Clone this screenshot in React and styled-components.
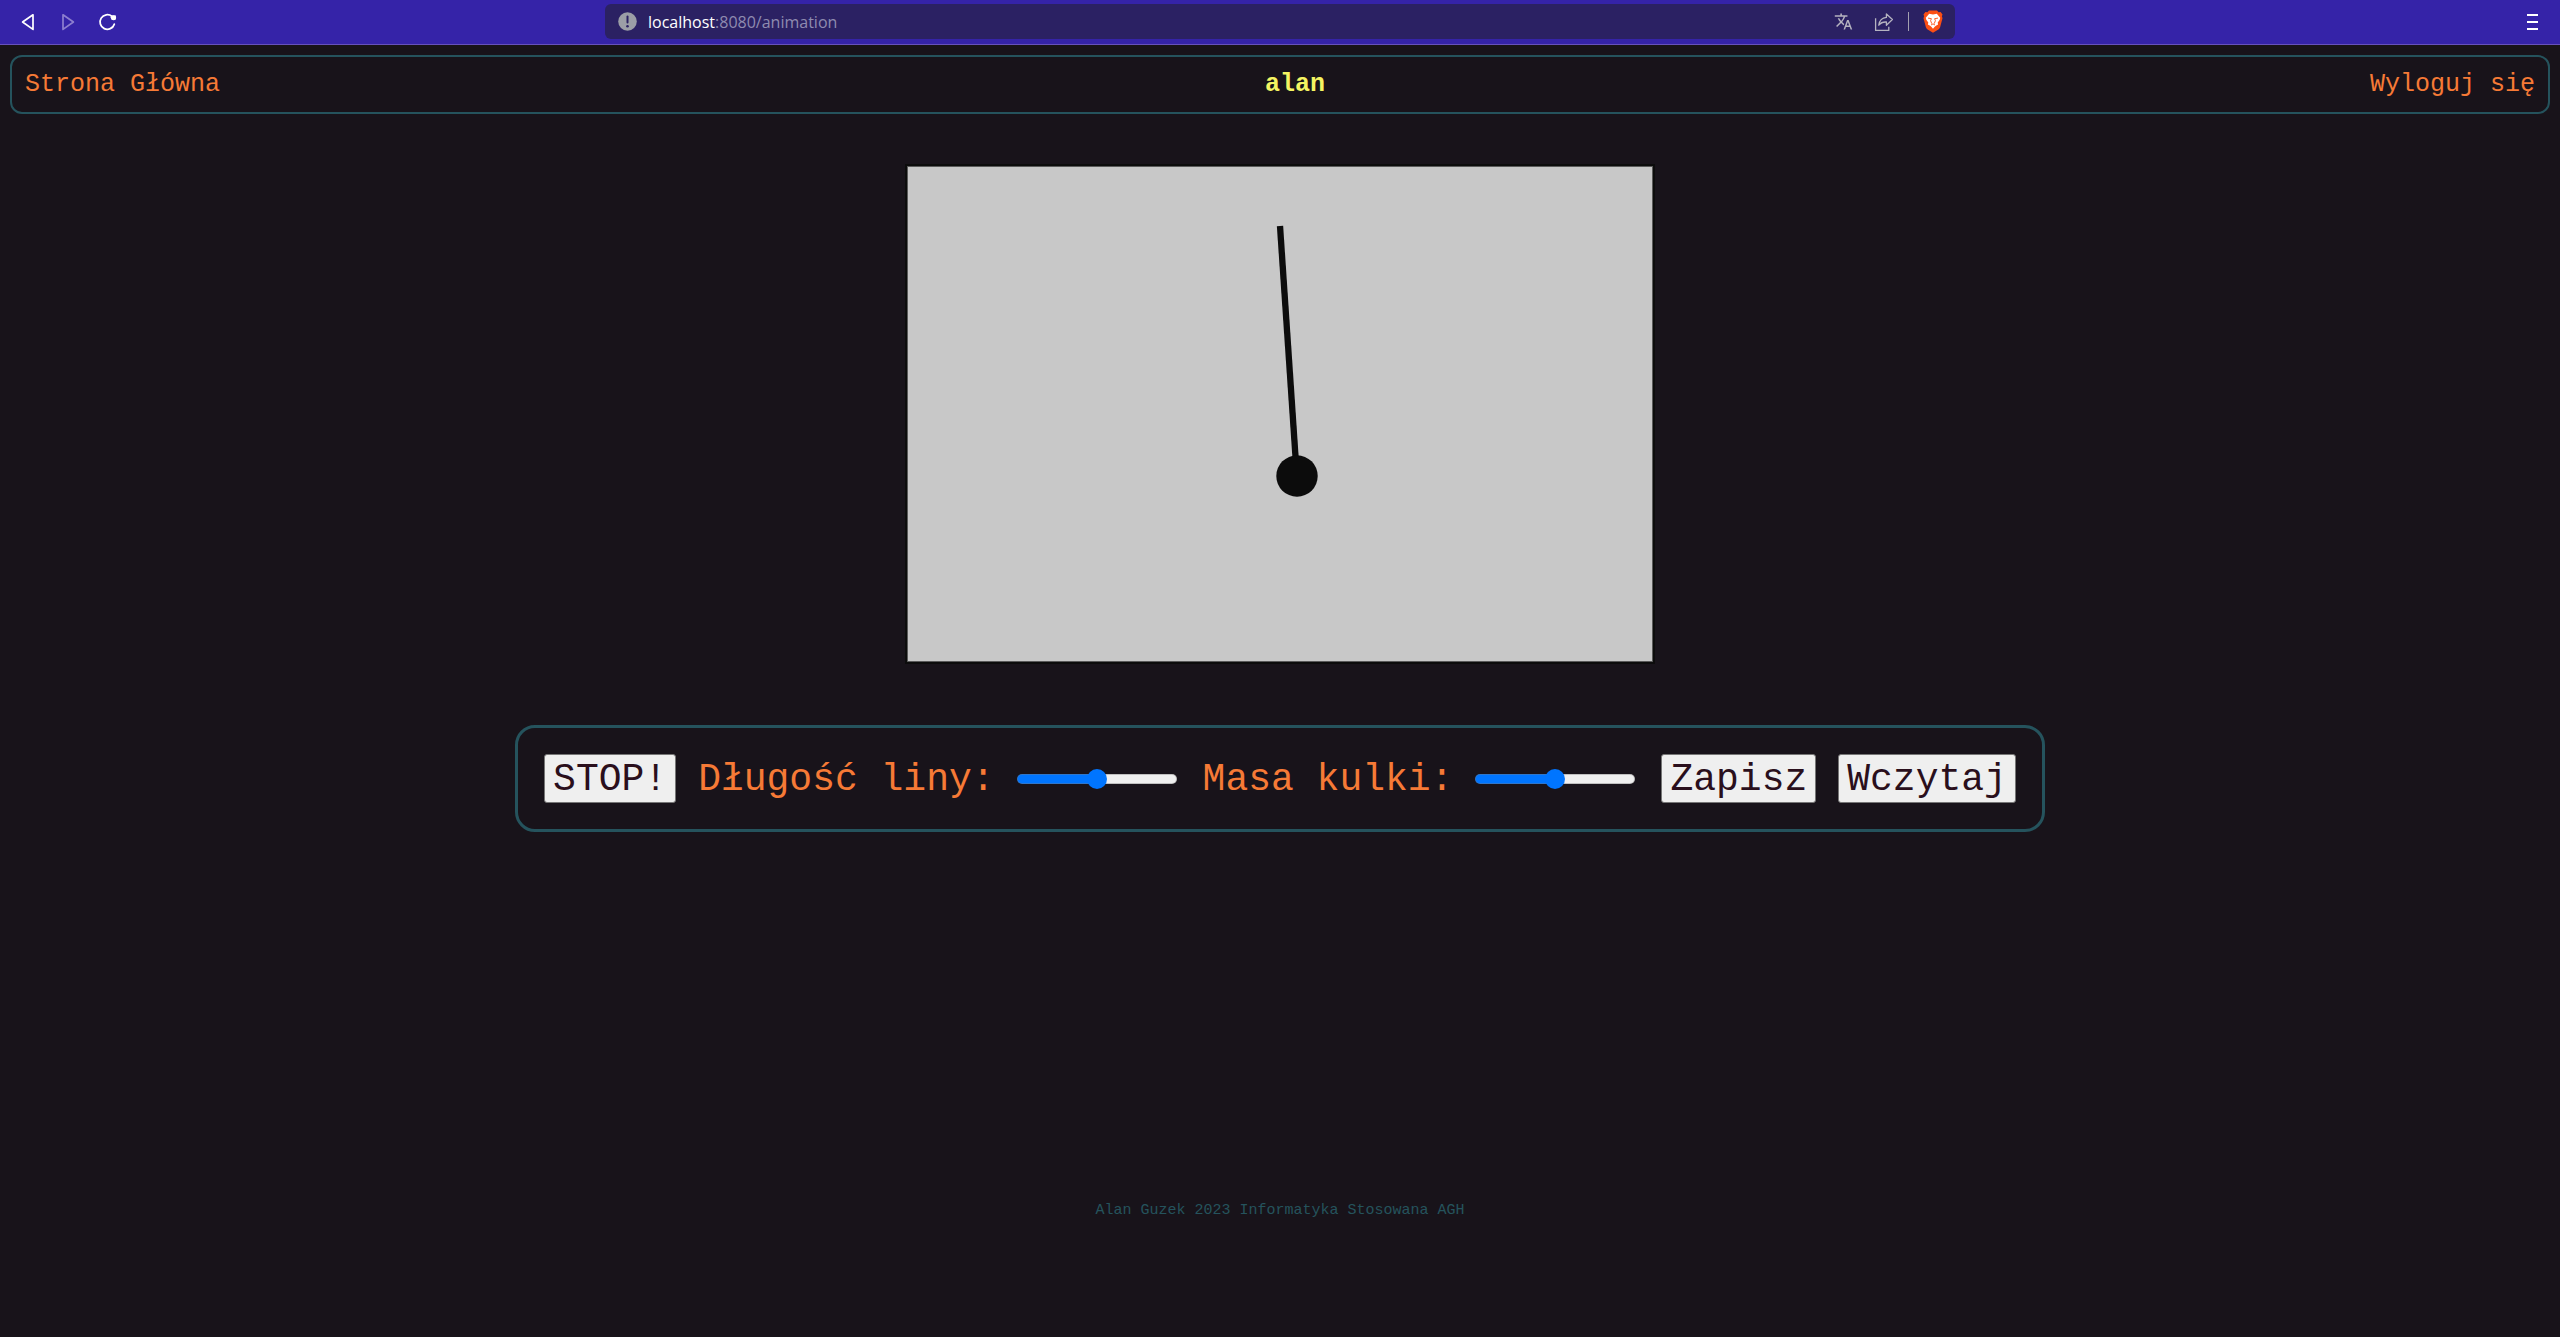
import React, { useState } from "react";
import styled, { createGlobalStyle } from "styled-components";
import { MdTranslate } from "react-icons/md";

const GlobalStyle = createGlobalStyle`
  *, *::before, *::after { box-sizing: border-box; }
  html, body, #root { height: 100%; }
  body {
    margin: 0;
    background: #18131a;
    font-family: "Courier New", "Liberation Mono", monospace;
  }
`;

const Page = styled.div`
  min-height: 100%;
  display: flex;
  flex-direction: column;
`;

const BrowserBar = styled.header`
  display: grid;
  grid-template-columns: 1fr minmax(0, 1350px) 1fr;
  align-items: center;
  height: 45px;
  padding: 0 15px 1px;
  background: #3523a8;
  border-bottom: 1px solid #6751bd;
  font-family: "Open Sans", "Noto Sans", sans-serif;
`;

const BarGroup = styled.div`
  display: flex;
  align-items: center;
  justify-content: ${(p) => (p.$end ? "flex-end" : "flex-start")};
  gap: 14px;
`;

const IconButton = styled.button`
  display: flex;
  align-items: center;
  justify-content: center;
  width: 26px;
  height: 26px;
  padding: 0;
  border: 0;
  background: none;
  color: ${(p) => p.$color || "#ffffff"};
`;

const AddressBar = styled.div`
  display: flex;
  align-items: center;
  gap: 11px;
  height: 35px;
  padding: 0 12px 0 13px;
  border-radius: 6px;
  background: #2b2163;
`;

const Address = styled.div`
  flex: 1;
  font-size: 16px;
  line-height: 24px;
  color: #8f8bb0;
`;

const Host = styled.span`
  color: #ffffff;
`;

const AddressActions = styled.div`
  display: flex;
  align-items: center;
  gap: 15px;
`;

const Shield = styled.div`
  display: flex;
  align-items: center;
  gap: 14px;
  margin-left: -4px;
`;

const Divider = styled.span`
  width: 1px;
  height: 19px;
  background: #a3a0b0;
`;

const NavBar = styled.nav`
  display: flex;
  align-items: center;
  justify-content: space-between;
  height: 59px;
  margin: 10px 10px 0;
  padding: 0 13px;
  border: 2px solid #25535d;
  border-radius: 12px;
  font-size: 25px;
  line-height: 28px;
`;

const NavLink = styled.a`
  color: #f67a36;
  text-decoration: none;
`;

const UserName = styled.span`
  color: #f4f462;
  font-weight: 700;
`;

const Main = styled.main`
  display: flex;
  flex-direction: column;
  align-items: center;
  gap: 61px;
  padding-top: 50px;
`;

const Stage = styled.svg`
  display: block;
  width: 750px;
  max-width: 100%;
  background: #c8c8c8;
`;

const Controls = styled.form`
  display: flex;
  align-items: center;
  gap: 22px;
  height: 107px;
  padding: 0 26px;
  border: 3px solid #25535d;
  border-radius: 20px;
  font-size: 38px;
  line-height: 44px;
`;

const ControlButton = styled.button`
  padding: 3px 8px 0;
  border: 1px solid #767676;
  border-radius: 3px;
  background: #efefef;
  color: #2a0f1c;
  font: inherit;
`;

const ControlLabel = styled.label`
  padding-top: 3px;
  color: #f67a36;
`;

const Slider = styled.input`
  appearance: none;
  width: 160px;
  height: 20px;
  margin: 0 4px 0 0;
  background: none;

  &::-webkit-slider-runnable-track {
    height: 10px;
    border: 1px solid rgba(120, 120, 120, 0.4);
    border-radius: 5px;
    background: linear-gradient(
      to right,
      #0075ff ${(p) => p.value}%,
      #efefef ${(p) => p.value}%
    ) border-box;
  }

  &::-webkit-slider-thumb {
    appearance: none;
    width: 20px;
    height: 20px;
    margin-top: -6px;
    border-radius: 50%;
    background: #0075ff;
  }
`;

const Footer = styled.footer`
  margin-top: 370px;
  text-align: center;
  font-size: 15px;
  line-height: 18px;
  color: #25535d;
`;

function BackIcon() {
  return (
    <svg width="26" height="26" viewBox="0 0 26 26" fill="none" stroke="currentColor" strokeWidth="1.7" strokeLinejoin="round">
      <path d="M18 5.8v14.6L7.6 13z" />
    </svg>
  );
}

function ForwardIcon() {
  return (
    <svg width="26" height="26" viewBox="0 0 26 26" fill="none" stroke="currentColor" strokeWidth="1.7" strokeLinejoin="round">
      <path d="M8 5.8v14.6L18.4 13z" />
    </svg>
  );
}

function ReloadIcon() {
  return (
    <svg width="26" height="26" viewBox="0 0 26 26" fill="none" stroke="currentColor" strokeWidth="1.8" strokeLinecap="round">
      <path d="M19.3 15.2A7.3 7.3 0 1 1 17 7.4" />
      <path d="M16 6.6h5l-.8 4.2-3.2.2-1.4-2.6z" fill="currentColor" stroke="none" />
      <circle cx="18.6" cy="8.8" r="2.5" fill="currentColor" stroke="none" />
    </svg>
  );
}

function InfoIcon() {
  return (
    <svg width="19" height="19" viewBox="0 0 19 19">
      <circle cx="9.5" cy="9.5" r="9.3" fill="#9b9ea6" />
      <rect x="8.5" y="3.5" width="2" height="8" rx="1" fill="#2b2163" />
      <circle cx="9.5" cy="14.3" r="1.3" fill="#2b2163" />
    </svg>
  );
}

function ShareIcon() {
  return (
    <svg width="20" height="20" viewBox="0 0 20 20" fill="none" stroke="currentColor" strokeWidth="1.3" strokeLinejoin="round">
      <path d="M1.600 6.200v12.200h13.200v-3.600" />
      <path d="M4.800 13.200c.6-4.600 3-7.400 7.600-7.800V2l6 5.600-6 5.600V10c-3.600-.2-5.800.8-7.600 3.200z" />
    </svg>
  );
}

function LionIcon() {
  return (
    <svg width="20" height="23" viewBox="0 0 20 23">
      <path d="M6 .5h8l1.600 1.700 2-.2 1.900 2.500-.6 1.800.6 2-2.400 9c-.3 1-.9 1.700-1.700 2.300L10 22.800l-5.400-3.200c-.8-.6-1.400-1.300-1.700-2.300L.5 8.300l.6-2-.6-1.800L2.400 2l2 .2z" fill="#fb4f14" />
      <path d="M6.200 3.800 10 4.500l3.800-.7 3.400 4-.5 1.900-2 2.900.4 2-2.200 1.200-1.200.9L10 18.800l-1.700-2.100-1.200-.9-2.200-1.200.4-2-2-2.900-.5-1.900z" fill="#fff" />
      <path d="M5 8.100l3.400.6-.8 2 1.200 3M15 8.100l-3.400.6.8 2-1.200 3M8 15l2-1.100 2 1.100" fill="none" stroke="#fb4f14" strokeWidth="0.900" />
    </svg>
  );
}

function MenuIcon() {
  return (
    <svg width="26" height="26" viewBox="0 0 26 26" fill="currentColor">
      <path d="M8 5h11v2H8zM8 12h11v2H8zM8 19h11v2H8z" />
    </svg>
  );
}

function Pendulum() {
  return (
    <Stage viewBox="0 0 750 500" role="img" aria-label="Wahadło">
      <rect x="2.500" y="2.500" width="745" height="495" fill="none" stroke="#5a5a5a" />
      <rect x="1" y="1" width="748" height="498" fill="none" stroke="#0c0c0c" strokeWidth="2" />
      <line x1="375" y1="62" x2="391" y2="300" stroke="#0c0c0c" strokeWidth="6.300" />
      <circle cx="392" cy="312" r="20.700" fill="#0c0c0c" />
    </Stage>
  );
}

export default function App() {
  const [length, setLength] = useState(50);
  const [mass, setMass] = useState(50);

  return (
    <>
      <GlobalStyle />
      <Page>
        <BrowserBar>
          <BarGroup>
            <IconButton aria-label="Wstecz"><BackIcon /></IconButton>
            <IconButton aria-label="Dalej" $color="#8d7fcf"><ForwardIcon /></IconButton>
            <IconButton aria-label="Odśwież"><ReloadIcon /></IconButton>
          </BarGroup>
          <AddressBar>
            <InfoIcon />
            <Address><Host>localhost</Host>:8080/animation</Address>
            <AddressActions>
              <IconButton aria-label="Przetłumacz" $color="#b5b3c0"><MdTranslate size={19} /></IconButton>
              <IconButton aria-label="Udostępnij" $color="#b5b3c0"><ShareIcon /></IconButton>
              <Shield>
                <Divider />
                <LionIcon />
              </Shield>
            </AddressActions>
          </AddressBar>
          <BarGroup $end>
            <IconButton aria-label="Menu"><MenuIcon /></IconButton>
          </BarGroup>
        </BrowserBar>
        <NavBar>
          <NavLink href="#home">Strona Główna</NavLink>
          <UserName>alan</UserName>
          <NavLink href="#logout">Wyloguj się</NavLink>
        </NavBar>
        <Main>
          <Pendulum />
          <Controls onSubmit={(e) => e.preventDefault()}>
            <ControlButton type="button">STOP!</ControlButton>
            <ControlLabel htmlFor="length">Długość liny:</ControlLabel>
            <Slider id="length" type="range" min="0" max="100" value={length} onChange={(e) => setLength(e.target.value)} />
            <ControlLabel htmlFor="mass">Masa kulki:</ControlLabel>
            <Slider id="mass" type="range" min="0" max="100" value={mass} onChange={(e) => setMass(e.target.value)} />
            <ControlButton type="button">Zapisz</ControlButton>
            <ControlButton type="button">Wczytaj</ControlButton>
          </Controls>
        </Main>
        <Footer>Alan Guzek 2023 Informatyka Stosowana AGH</Footer>
      </Page>
    </>
  );
}
